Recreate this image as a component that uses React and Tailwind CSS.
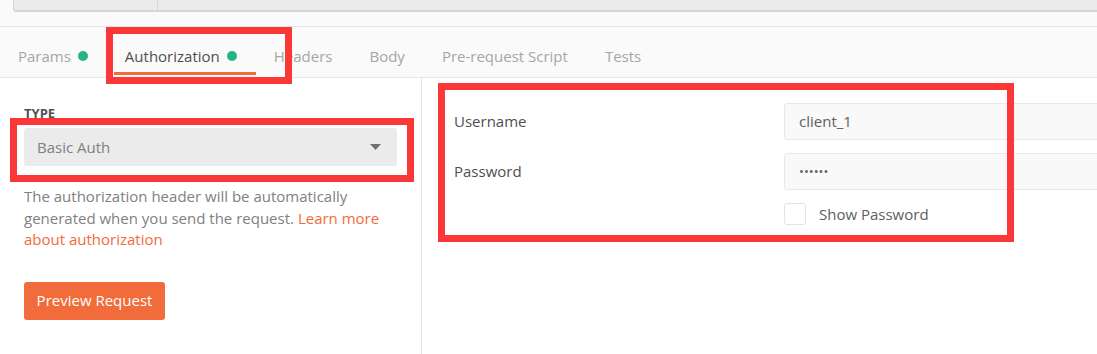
import React from "react";

const tabs = [
  { name: "Params", dot: true },
  { name: "Authorization", dot: true, active: true },
  { name: "Headers" },
  { name: "Body" },
  { name: "Pre-request Script" },
  { name: "Tests" },
];

const App = () => {
  return (
    <div
      className="relative w-[1097px] h-[354px] overflow-hidden bg-white text-[15px]"
      style={{ fontFamily: '"Open Sans", "Noto Sans", sans-serif' }}
    >
      {/* URL bar remnant */}
      <div className="h-[27px] bg-[#fafafa] border-b border-[#e6e6e6]">
        <div className="ml-[13px] flex h-[12px] bg-[#ebebeb] border-b-2 border-l border-[#d6d6d6] rounded-bl-[3px]">
          <div className="w-[144px] border-r border-[#d6d6d6]" />
          <div className="flex-1" />
        </div>
      </div>

      {/* Tabs */}
      <div className="flex h-[51px] bg-[#fafafa] border-b border-[#e6e6e6]">
        {tabs.map((tab) => (
          <div
            key={tab.name}
            className={`relative flex items-start pt-[19px] pl-[18px] pr-[19px] leading-[20px] ${
              tab.active ? "text-[#505050]" : "text-[#a6a6a6]"
            }`}
          >
            <span>{tab.name}</span>
            {tab.dot && (
              <span className="ml-[7px] mt-[5px] w-[10px] h-[10px] rounded-full bg-[#26b47f]" />
            )}
            {tab.active && (
              <span className="absolute left-[7px] right-0 bottom-[2px] h-[3px] bg-[#f26b3a]" />
            )}
          </div>
        ))}
      </div>

      {/* Body */}
      <div className="flex h-[276px]">
        <div className="w-[422px] shrink-0 border-r border-[#e6e6e6] px-[24px] pt-[27px]">
          <div className="text-[13px] font-bold text-[#505050] leading-[16px]">TYPE</div>
          <div className="mt-[7px] flex items-center justify-between h-[38px] rounded-[3px] bg-[#ebebeb] pl-[13px] pr-[16px] text-[#808080]">
            <span>Basic Auth</span>
            <svg width="11" height="6" viewBox="0 0 11 6">
              <path d="M0 0 L11 0 L5.5 6 Z" fill="#707070" />
            </svg>
          </div>
          <p className="mt-[20px] leading-[21.5px] text-[#808080]">
            The authorization header will be automatically generated when you
            send the request.{" "}
            <span className="text-[#f26b3a]">Learn more about authorization</span>
          </p>
          <button className="mt-[31px] flex items-center justify-center h-[38px] w-[141px] rounded-[3px] bg-[#f26b3a] text-white font-medium">
            Preview Request
          </button>
        </div>

        <div className="flex-1 pl-[32px] pt-[25px]">
          <div className="grid grid-cols-[330px_1fr] gap-y-[13px] items-center text-[#505050]">
            <span>Username</span>
            <div className="flex items-center h-[37px] w-[360px] rounded-[3px] border border-[#e8e8e8] bg-[#f9f9f9] pl-[14px] text-[#606060]">
              client_1
            </div>
            <span>Password</span>
            <div className="flex items-center h-[37px] w-[360px] rounded-[3px] border border-[#e8e8e8] bg-[#f9f9f9] pl-[14px] text-[#606060] text-[13px]">
              ••••••
            </div>
            <span />
            <div className="flex items-center">
              <span className="w-[22px] h-[22px] rounded-[3px] border border-[#e3e3e3] bg-white" />
              <span className="ml-[13px] text-[#606060]">Show Password</span>
            </div>
          </div>
        </div>
      </div>

      {/* Annotation boxes */}
      <div className="absolute left-[106px] top-[27px] w-[186px] h-[57px] border-[7px] border-[#fb3838]" />
      <div className="absolute left-[10px] top-[118px] w-[404px] h-[64px] border-[7px] border-[#fb3838]" />
      <div className="absolute left-[438px] top-[83px] w-[576px] h-[159px] border-[7px] border-[#fb3838]" />
    </div>
  );
};

export default App;
